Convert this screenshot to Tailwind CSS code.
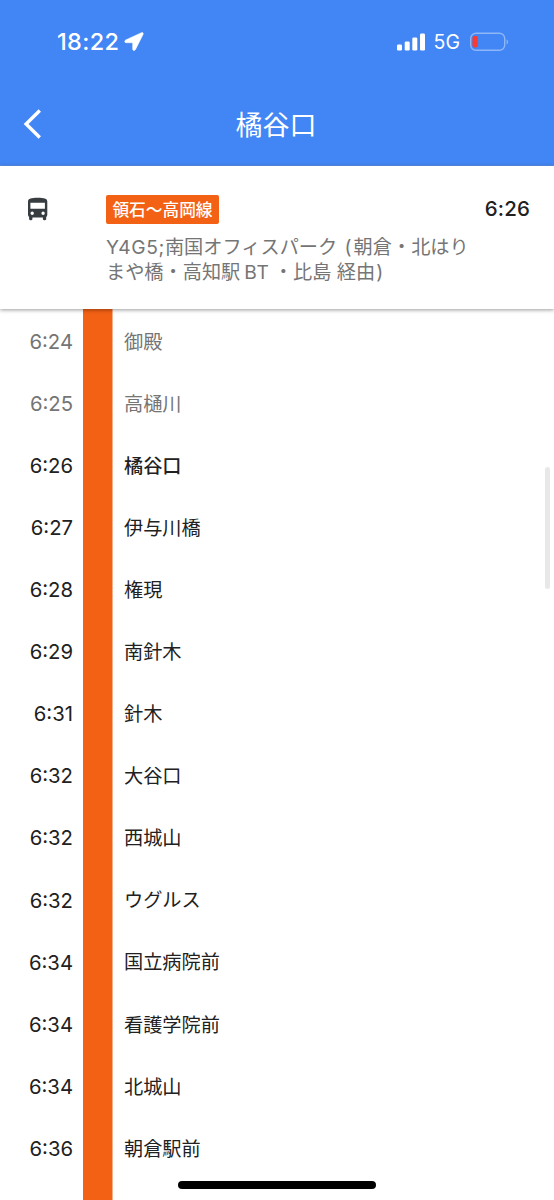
<!DOCTYPE html>
<html lang="ja">
<head>
  <meta charset="UTF-8" />
  <meta name="viewport" content="width=device-width, initial-scale=1.0"/>
  <title>橘谷口</title>
  <script src="https://cdn.jsdelivr.net/npm/@tailwindcss/browser@4"></script>
</head>
<body class="relative h-[1200px] overflow-hidden bg-white font-['Inter','Noto_Sans_CJK_JP',sans-serif] text-[#212121]">
  <div class="flex h-full flex-col">

    <header class="h-[166px] shrink-0 border-b border-[#5b90ee] bg-[#4285f4] text-white">
      <!-- Status bar -->
      <div class="flex h-[83px] items-center justify-between pr-[45px] pl-[57px]">
        <div class="flex items-center gap-[5px]">
          <span class="pt-px text-[23.500px] leading-none font-medium tracking-[0.350px]">18:22</span>
          <svg class="h-[19px] w-[20px]" viewBox="0 0 20 19" fill="currentColor" stroke="currentColor" stroke-width="0.600">
            <path d="M17.500.7 1.700 8c-1.500.8-1.100 2.700.5 2.700h5.900c.4 0 .6.2.6.600v5.600c0 1.900 2 2.200 2.800.5L19.100 2.300c.5-1.100-.5-2.100-1.600-1.600z"/>
          </svg>
        </div>
        <div class="flex items-center">
          <svg class="h-[18px] w-[28px]" viewBox="0 0 28 18" fill="currentColor">
            <rect x="0" y="11.500" width="5" height="6" rx="1.300"/>
            <rect x="7.700" y="8.500" width="5" height="9" rx="1.300"/>
            <rect x="15.300" y="4.500" width="5" height="13" rx="1.300"/>
            <rect x="23" y="0.500" width="5" height="17" rx="1.300"/>
          </svg>
          <span class="ml-[9px] pt-[2px] text-[19.500px] leading-none">5G</span>
          <svg class="ml-[10px] h-[20px] w-[39px]" viewBox="0 0 39 20">
            <rect x="0.700" y="1.200" width="34" height="17" rx="5.200" fill="none" stroke="#8fb7f8" stroke-width="1.400"/>
            <path d="M36.600 7.400c1.900.6 1.900 4.200 0 4.900z" fill="#8fb7f8"/>
            <rect x="2.500" y="4" width="5.300" height="11.400" rx="1.800" fill="#fb3b30"/>
          </svg>
        </div>
      </div>

      <!-- Title -->
      <div class="grid h-[82px] grid-cols-[1fr_auto_1fr] items-center">
        <svg class="ml-[23px] h-[30px] w-[19px]" viewBox="0 0 19 30" fill="none" stroke="currentColor" stroke-width="3.400">
          <path d="M16.800 1.500 3.100 15l13.700 13.500"/>
        </svg>
        <h1 class="-ml-[2px] pt-[2px] text-[27px] leading-none">橘谷口</h1>
      </div>
    </header>

    <!-- Trip summary -->
    <section class="relative z-10 flex h-[143px] shrink-0 items-start bg-white pr-[24px] pl-[27px] shadow-[0_1px_4px_rgba(0,0,0,0.4)]">
      <svg class="mt-[31px] h-[24px] w-[21px]" viewBox="0 0 21 24" fill="#363c40">
        <path fill-rule="evenodd" d="M1 4.500C1 1.500 4.500.8 10.700.8S20.300 1.500 20.300 4.500v13.300c0 .9-.4 1.700-1.100 2.200v2c0 .7-.5 1.200-1.200 1.200h-.9c-.7 0-1.200-.5-1.200-1.200v-1.500H5.400V22c0 .7-.5 1.200-1.200 1.200h-.9c-.7 0-1.200-.5-1.200-1.200v-2C1.400 19.500 1 18.700 1 17.800zM3.400 5.700v6h14.500v-6zM5.200 14.600a1.700 1.700 0 1 0 0 3.400 1.700 1.700 0 0 0 0-3.400zm10.900 0a1.700 1.700 0 1 0 0 3.400 1.700 1.700 0 0 0 0-3.400z"/>
      </svg>
      <div class="ml-[58px] w-[372px] pt-[29px]">
        <span class="flex h-[29px] w-[113px] items-center justify-center rounded-[2px] bg-[#f36114] pt-[2px] text-[16.700px] leading-none font-medium whitespace-nowrap text-white">領石〜高岡線</span>
        <p class="mt-[11px] text-[19.200px] leading-[25px] whitespace-nowrap text-[#757575]"><span class="tracking-[0.600px]">Y4G5;</span>南国オフィスパーク<span class="ml-[2px] mr-[2px]"> (</span>朝倉・北はり<br>まや橋・高知駅<span class="ml-[4px] tracking-[0.600px]">BT</span><span class="-ml-px"> </span>・比島 経由<span class="ml-px">)</span></p>
      </div>
      <time class="ml-auto pt-[31px] text-[20.500px] leading-[24px] font-medium tracking-[0.150px]">6:26</time>
    </section>

    <!-- Stops -->
    <main class="flex-1 bg-[linear-gradient(#f36114,#f36114)] bg-[length:29.500px_100%] bg-[position:82.500px_0] bg-no-repeat">
      <ul class="text-[19.200px]">
        <li class="grid h-[62.080px] grid-cols-[73px_1fr] items-center gap-x-[51px] pt-[4px] text-[#757575]"><time class="text-right text-[20.300px]">6:24</time><span>御殿</span></li>
        <li class="grid h-[62.080px] grid-cols-[73px_1fr] items-center gap-x-[51px] pt-[4px] text-[#757575]"><time class="text-right text-[20.300px]">6:25</time><span>高樋川</span></li>
        <li class="grid h-[62.080px] grid-cols-[73px_1fr] items-center gap-x-[51px] pt-[4px]"><time class="text-right text-[20.300px]">6:26</time><span class="font-medium">橘谷口</span></li>
        <li class="grid h-[62.080px] grid-cols-[73px_1fr] items-center gap-x-[51px] pt-[4px]"><time class="text-right text-[20.300px]">6:27</time><span>伊与川橋</span></li>
        <li class="grid h-[62.080px] grid-cols-[73px_1fr] items-center gap-x-[51px] pt-[4px]"><time class="text-right text-[20.300px]">6:28</time><span>権現</span></li>
        <li class="grid h-[62.080px] grid-cols-[73px_1fr] items-center gap-x-[51px] pt-[4px]"><time class="text-right text-[20.300px]">6:29</time><span>南針木</span></li>
        <li class="grid h-[62.080px] grid-cols-[73px_1fr] items-center gap-x-[51px] pt-[4px]"><time class="text-right text-[20.300px]">6:31</time><span>針木</span></li>
        <li class="grid h-[62.080px] grid-cols-[73px_1fr] items-center gap-x-[51px] pt-[4px]"><time class="text-right text-[20.300px]">6:32</time><span>大谷口</span></li>
        <li class="grid h-[62.080px] grid-cols-[73px_1fr] items-center gap-x-[51px] pt-[4px]"><time class="text-right text-[20.300px]">6:32</time><span>西城山</span></li>
        <li class="grid h-[62.080px] grid-cols-[73px_1fr] items-center gap-x-[51px] pt-[4px]"><time class="text-right text-[20.300px]">6:32</time><span>ウグルス</span></li>
        <li class="grid h-[62.080px] grid-cols-[73px_1fr] items-center gap-x-[51px] pt-[4px]"><time class="text-right text-[20.300px]">6:34</time><span>国立病院前</span></li>
        <li class="grid h-[62.080px] grid-cols-[73px_1fr] items-center gap-x-[51px] pt-[4px]"><time class="text-right text-[20.300px]">6:34</time><span>看護学院前</span></li>
        <li class="grid h-[62.080px] grid-cols-[73px_1fr] items-center gap-x-[51px] pt-[4px]"><time class="text-right text-[20.300px]">6:34</time><span>北城山</span></li>
        <li class="grid h-[62.080px] grid-cols-[73px_1fr] items-center gap-x-[51px] pt-[4px]"><time class="text-right text-[20.300px]">6:36</time><span>朝倉駅前</span></li>
      </ul>
    </main>
  </div>

  <!-- Scroll indicator and home bar -->
  <div class="absolute top-[467px] right-[4px] h-[122px] w-[5px] rounded-full bg-[#e8e8e8]"></div>
  <div class="absolute bottom-[11px] left-[178px] h-[8px] w-[198px] rounded-full bg-black"></div>
</body>
</html>
